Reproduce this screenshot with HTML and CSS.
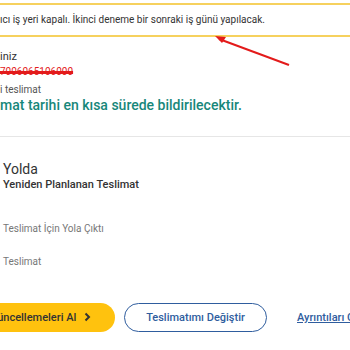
FILE: index.html
```html
<!DOCTYPE html>
<html lang="tr">
<head>
    <meta charset="UTF-8">
    <meta name="viewport" content="width=device-width, initial-scale=1.0">
    <title>Gönderi Takibi</title>
    <link rel="stylesheet" href="styles.css">
</head>
<body>
    <div class="alert">
        <p>ıcı iş yeri kapalı. İkinci deneme bir sonraki iş günü yapılacak.</p>
        <!-- isaretleme oku -->
        <svg class="arrow" width="90" height="40" viewBox="0 0 90 40">
            <line x1="80" y1="31" x2="10" y2="5" stroke="#e31b1b" stroke-width="2"/>
            <polygon points="6,2 17,3 13,9" fill="#e31b1b"/>
        </svg>
    </div>

    <div class="tracking-info">
        <p class="label">iniz</p>
        <p class="tracking-number">7006065106000</p>
        <p class="small-label">i teslimat</p>
        <p class="delivery-date">mat tarihi en kısa sürede bildirilecektir.</p>
    </div>

    <div class="status">
        <h3 class="status-title">Yolda</h3>
        <p class="status-sub">Yeniden Planlanan Teslimat</p>
        <ul class="steps">
            <li>Teslimat İçin Yola Çıktı</li>
            <li>Teslimat</li>
        </ul>
    </div>

    <div class="actions">
        <button class="btn-primary">Güncellemeleri Al
            <svg class="chevron" width="7" height="10" viewBox="0 0 7 10"><path d="M1.5 1.5 L5 5 L1.5 8.5" fill="none" stroke="#333" stroke-width="2"/></svg>
        </button>
        <button class="btn-outline">Teslimatımı Değiştir</button>
        <a href="#" class="details-link">Ayrıntıları Göster</a>
    </div>
</body>
</html>
```

FILE: styles.css
```css
* {
    box-sizing: border-box;
    font-family: Roboto, 'Noto Sans', sans-serif;
}

body {
    margin: 0;
    padding: 0;
    background-color: #fff;
    color: #333;
    overflow: hidden;
}

p, h3, ul {
    margin: 0;
}

.alert {
    position: relative;
    margin-top: 3px;
    border-top: 2px solid #f6d15e;
    border-bottom: 2px solid #f6d15e;
    padding: 8px 0;
    font-size: 10px;
    line-height: 14px;
    color: #333;
}

.arrow {
    position: absolute;
    left: 209px;
    top: 29px;
}

.tracking-info {
    padding-top: 13px;
    padding-bottom: 22px;
    border-bottom: 1px solid #e6e6e6;
}

.label {
    font-size: 11px;
    line-height: 14px;
}

.tracking-number {
    width: fit-content;
    margin-top: 1px;
    font-size: 10px;
    line-height: 14px;
    color: #e31b1b;
    text-decoration: line-through 3px #e31b1b;
}

.small-label {
    margin-top: 4px;
    font-size: 10px;
    line-height: 14px;
    color: #555;
}

.delivery-date {
    font-size: 14px;
    line-height: 17px;
    font-weight: 500;
    color: #17877a;
}

.status {
    padding: 24px 0 0 3px;
}

.status-title {
    font-size: 14px;
    line-height: 17px;
    font-weight: 400;
    color: #333;
}

.status-sub {
    font-size: 11px;
    line-height: 14px;
    font-weight: 500;
    color: #333;
}

.steps {
    list-style: none;
    padding: 0;
    margin-top: 30px;
}

.steps li {
    font-size: 10px;
    line-height: 14px;
    color: #777;
    margin-bottom: 19px;
}

.steps li:last-child {
    margin-bottom: 0;
}

.actions {
    display: flex;
    align-items: center;
    gap: 9px;
    margin-top: 34px;
    margin-left: -28px;
    white-space: nowrap;
}

button {
    flex-shrink: 0;
    height: 29px;
    border-radius: 15px;
    font-size: 11px;
    font-weight: 500;
    cursor: pointer;
}

.btn-primary {
    width: 143px;
    background-color: #ffc20e;
    color: #333;
    border: none;
    padding: 0 24px 0 0;
    text-align: right;
}

.chevron {
    margin-left: 5px;
    vertical-align: -1px;
}

.btn-outline {
    width: 143px;
    background-color: #fff;
    color: #2f5d9e;
    border: 1.5px solid #2f5d9e;
}

.details-link {
    flex-shrink: 0;
    margin-left: 21px;
    font-size: 11px;
    font-weight: 500;
    color: #2f5d9e;
}
```
